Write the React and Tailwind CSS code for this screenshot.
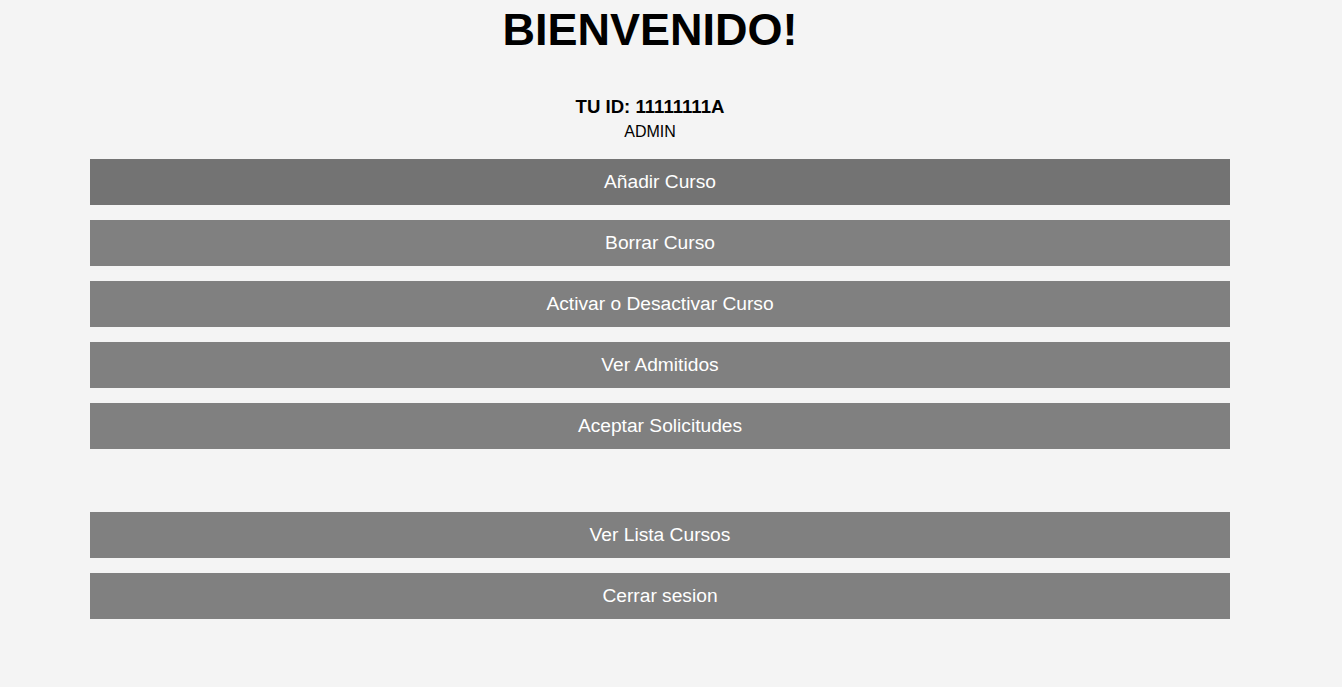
import React from 'react';

const topButtons = [
  'Añadir Curso',
  'Borrar Curso',
  'Activar o Desactivar Curso',
  'Ver Admitidos',
  'Aceptar Solicitudes',
];

const bottomButtons = ['Ver Lista Cursos', 'Cerrar sesion'];

const MenuButton = ({ label, active }) => (
  <button
    className={
      'flex h-[46px] w-[1140px] items-center justify-center text-[19.2px] text-white ' +
      (active ? 'bg-[#737373]' : 'bg-[#808080] hover:bg-[#737373]')
    }
  >
    {label}
  </button>
);

const App = () => {
  return (
    <div
      className="min-h-[687px] w-full bg-[#f4f4f4] text-black"
      style={{ fontFamily: '"Liberation Sans", Arial, sans-serif' }}
    >
      {/* Header */}
      <div className="w-[1300px] text-center">
        <h1 className="h-[55px] text-[45px] font-bold leading-[59px]">BIENVENIDO!</h1>
        <p className="mt-[41px] text-[18.6px] font-bold leading-[21px]">TU ID: 11111111A</p>
        <p className="mt-[6px] text-[16px] leading-[18px]">ADMIN</p>
      </div>

      {/* Actions */}
      <div className="ml-[90px] mt-[18px] flex flex-col gap-[15px]">
        {topButtons.map((label, i) => (
          <MenuButton key={label} label={label} active={i === 0} />
        ))}
      </div>

      <div className="ml-[90px] mt-[63px] flex flex-col gap-[15px]">
        {bottomButtons.map((label) => (
          <MenuButton key={label} label={label} />
        ))}
      </div>
    </div>
  );
};

export default App;
